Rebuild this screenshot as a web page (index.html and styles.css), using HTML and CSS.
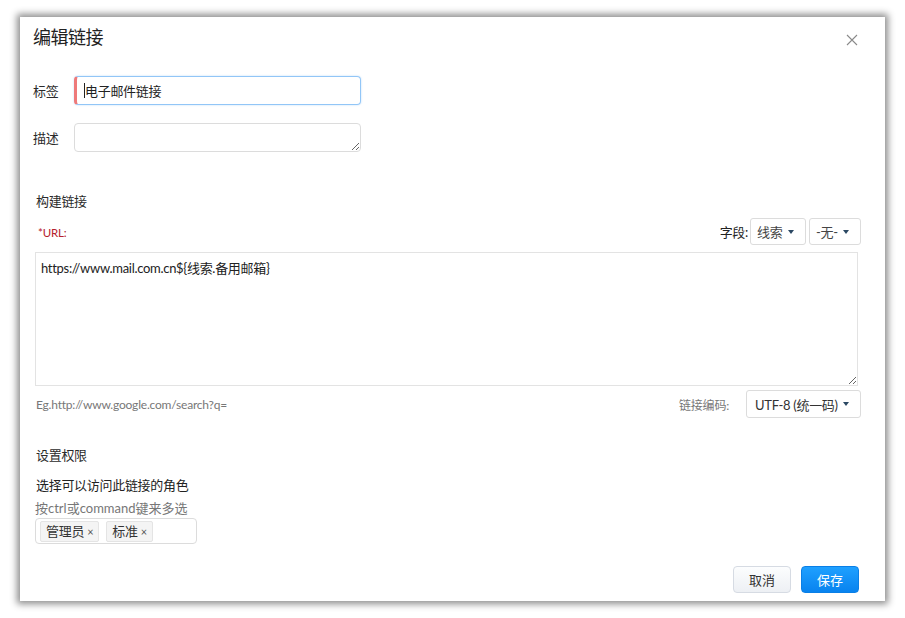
FILE: index.html
```html
<!DOCTYPE html>
<html lang="zh-CN">
<head>
    <meta charset="UTF-8">
    <title>编辑链接</title>
    <link rel="stylesheet" href="styles.css">
</head>
<body>
    <div class="dialog">
        <div class="dialog-header">
            <h2 class="dialog-title">编辑链接</h2>
            <svg class="close" width="12" height="12" viewBox="0 0 12 12"><path d="M1 1L11 11M11 1L1 11" stroke="#8a8a8a" stroke-width="1.1" fill="none"/></svg>
        </div>

        <div class="form">
            <div class="form-row">
                <label class="form-label">标签</label>
                <div class="input input-active"><span class="caret"></span>电子邮件链接</div>
            </div>
            <div class="form-row form-row-desc">
                <label class="form-label">描述</label>
                <textarea class="input textarea-small"></textarea>
            </div>
        </div>

        <div class="section">
            <div class="section-title">构建链接</div>
            <div class="url-row">
                <span class="required">*URL:</span>
                <div class="fields">
                    <span class="fields-label">字段:</span>
                    <div class="select select-field">线索 <i class="arrow"></i></div>
                    <div class="select select-none">-无- <i class="arrow"></i></div>
                </div>
            </div>
            <textarea class="url-text">https://www.mail.com.cn${线索.备用邮箱}</textarea>
            <div class="hint-row">
                <span class="hint">Eg.http://www.google.com/search?q=</span>
                <div class="encoding">
                    <span class="hint">链接编码:</span>
                    <div class="select select-encoding">UTF-8 (统一码) <i class="arrow"></i></div>
                </div>
            </div>
        </div>

        <div class="section section-perm">
            <div class="section-title">设置权限</div>
            <div class="perm-title">选择可以访问此链接的角色</div>
            <div class="perm-hint">按ctrl或command键来多选</div>
            <div class="multi">
                <span class="tag">管理员 <b>&times;</b></span>
                <span class="tag">标准 <b>&times;</b></span>
            </div>
        </div>

        <div class="dialog-footer">
            <button class="btn btn-cancel">取消</button>
            <button class="btn btn-save">保存</button>
        </div>
    </div>
</body>
</html>
```

FILE: styles.css
```css
body {
    margin: 0;
    padding: 17px 20px;
    background: #fff;
    font-family: Lato, "Noto Sans CJK SC", sans-serif;
    font-size: 13px;
    letter-spacing: -0.3px;
    color: #333;
}
.dialog {
    width: 865px;
    height: 584px;
    box-sizing: border-box;
    background: #fff;
    box-shadow: 0 0 7px 3px rgba(0, 0, 0, 0.45);
    padding: 0 24px 0 13px;
}
.dialog-header {
    display: flex;
    justify-content: space-between;
    align-items: flex-start;
    height: 46px;
}
.dialog-title {
    margin: 8px 0 0;
    font-size: 18px;
    line-height: 24px;
    letter-spacing: -0.5px;
    font-weight: normal;
    color: #222;
}
.close {
    margin: 17px 3px 0 0;
}
.form {
    margin-top: 13px;
}
.form-row {
    display: flex;
    align-items: center;
    height: 29px;
}
.form-row-desc {
    margin-top: 18px;
}
.form-label {
    width: 41px;
    line-height: 18px;
    color: #2a2a2a;
}
.input {
    width: 287px;
    height: 29px;
    box-sizing: border-box;
    border: 1px solid #dcdcdc;
    border-radius: 4px;
    font-family: inherit;
    font-size: 13px;
    color: #222;
    padding: 0 8px;
    margin: 0;
}
.input-active {
    display: flex;
    align-items: center;
    border-color: #92c6f7;
    border-left: 3px solid #ee7a7a;
    box-shadow: 0 0 2px rgba(80, 160, 240, 0.4);
    padding-left: 7px;
}
.caret {
    width: 1px;
    height: 15px;
    background: #222;
}
.textarea-small {
    resize: vertical;
    display: block;
}
.section {
    padding-left: 2px;
    margin-top: 39px;
}
.section-title {
    line-height: 20px;
    padding-left: 1px;
    color: #2a2a2a;
}
.url-row {
    display: flex;
    justify-content: space-between;
    align-items: center;
    height: 27px;
    margin-top: 7px;
}
.required {
    color: #b5202c;
    font-size: 11.5px;
    letter-spacing: -0.2px;
    padding: 2px 0 0 3px;
}
.fields {
    display: flex;
    align-items: center;
}
.fields-label {
    margin-right: 2px;
    color: #222;
}
.select {
    display: flex;
    align-items: center;
    justify-content: space-between;
    box-sizing: border-box;
    height: 27px;
    border: 1px solid #dcdcdc;
    border-radius: 3px;
    color: #444;
    padding: 0 11px 0 6px;
    background: #fff;
}
.select-field {
    width: 56px;
}
.select-none {
    width: 52px;
    margin-left: 3px;
}
.arrow {
    width: 0;
    height: 0;
    border-left: 3.5px solid transparent;
    border-right: 3.5px solid transparent;
    border-top: 4px solid #2b4863;
}
.url-text {
    display: block;
    width: 823px;
    height: 134px;
    box-sizing: border-box;
    margin: 7px 0 0;
    border: 1px solid #e3e3e3;
    border-radius: 0;
    padding: 5px 5px;
    font-family: inherit;
    font-size: 13px;
    letter-spacing: -0.3px;
    color: #222;
    resize: vertical;
}
.hint-row {
    display: flex;
    justify-content: space-between;
    align-items: center;
    height: 28px;
    margin-top: 4px;
}
.hint {
    font-size: 12px;
    letter-spacing: -0.2px;
    color: #777;
    padding-left: 1px;
}
.encoding {
    display: flex;
    align-items: center;
}
.select-encoding {
    width: 115px;
    height: 28px;
    margin-left: 17px;
    padding-left: 8px;
    color: #333;
}
.section-perm {
    margin-top: 27px;
}
.perm-title {
    line-height: 20px;
    margin-top: 10px;
    padding-left: 1px;
    color: #222;
}
.perm-hint {
    letter-spacing: 0;
    line-height: 16px;
    margin-top: 5px;
    color: #777;
}
.multi {
    display: flex;
    align-items: center;
    gap: 7px;
    width: 162px;
    height: 26px;
    box-sizing: border-box;
    margin-top: 2px;
    border: 1px solid #dcdcdc;
    border-radius: 4px;
    padding: 0 4px;
}
.tag {
    line-height: 18px;
    background: #f4f4f4;
    border: 1px solid #e4e4e4;
    border-radius: 2px;
    padding: 0 5px;
    color: #333;
}
.tag b {
    font-weight: normal;
    font-size: 11px;
    color: #555;
}
.dialog-footer {
    display: flex;
    justify-content: flex-end;
    gap: 10px;
    margin-top: 22px;
    padding-right: 2px;
}
.btn {
    height: 27px;
    width: 58px;
    border-radius: 4px;
    font-family: inherit;
    font-size: 13px;
    cursor: pointer;
}
.btn-cancel {
    background: linear-gradient(#fcfdfe, #edf0f4);
    border: 1px solid #d6dbe3;
    color: #333;
}
.btn-save {
    background: linear-gradient(#1fa0ff, #0883ef);
    border: 1px solid #0a7fe6;
    color: #fff;
}
```
